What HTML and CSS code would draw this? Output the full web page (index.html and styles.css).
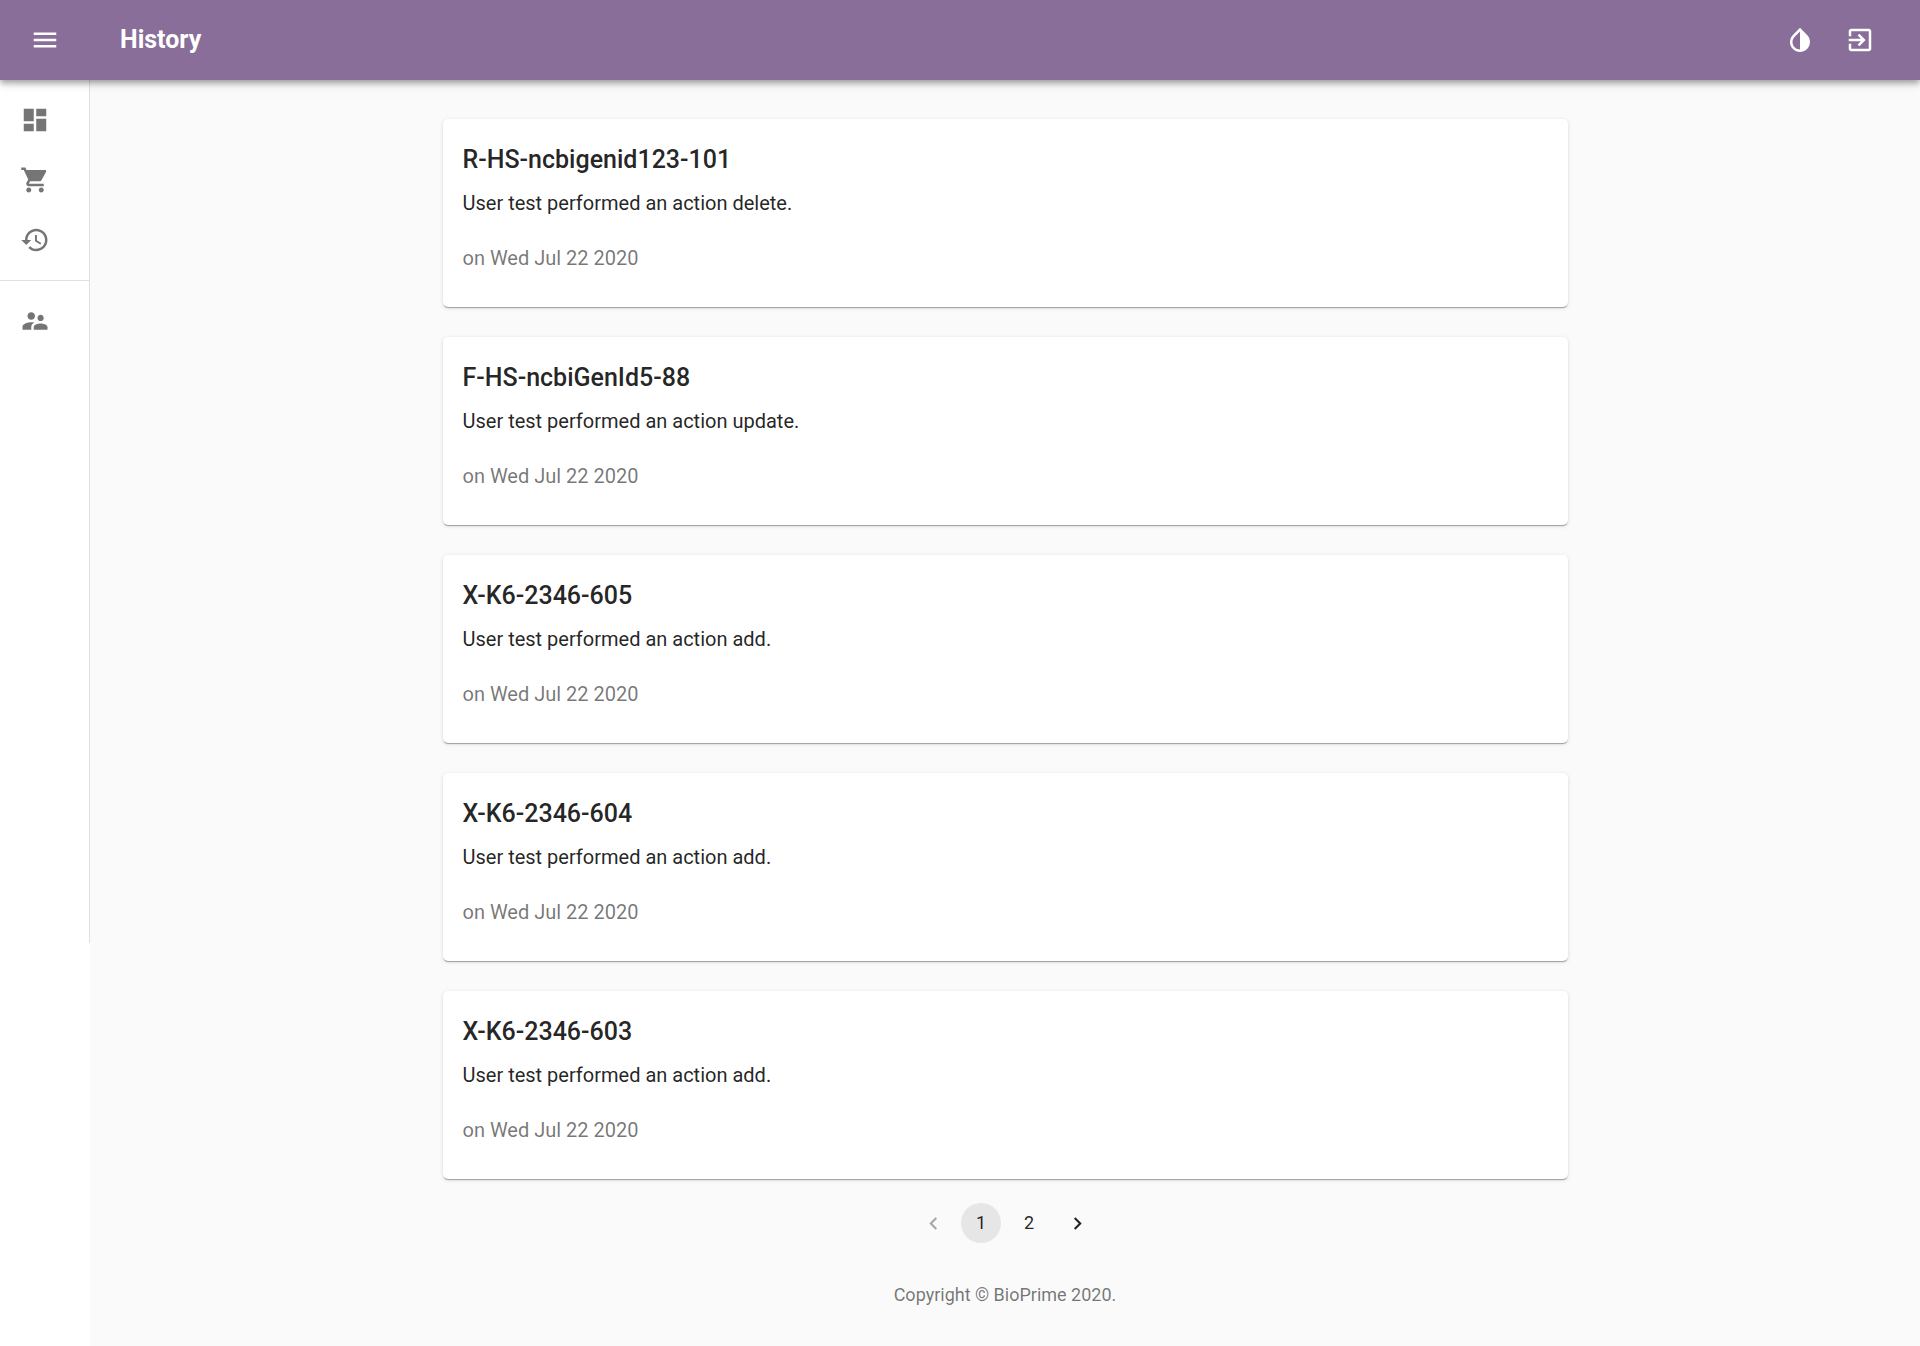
FILE: index.html
```
<!DOCTYPE html>
<html lang="en">
<head>
    <meta charset="UTF-8">
    <title>History</title>
    <link rel="stylesheet" href="styles.css">
</head>
<body>
    <header class="app-bar">
        <button class="icon-btn" type="button" aria-label="Open menu">
            <svg class="icon" viewBox="0 0 24 24"><path d="M3 18h18v-2H3v2zm0-5h18v-2H3v2zm0-7v2h18V6H3z"/></svg>
        </button>
        <h1 class="app-title">History</h1>
        <button class="icon-btn" type="button" aria-label="Toggle theme">
            <svg class="icon" viewBox="0 0 24 24"><path d="M17.66 7.93L12 2.27 6.34 7.93c-3.12 3.12-3.12 8.19 0 11.31C7.9 20.8 9.95 21.58 12 21.58c2.05 0 4.1-.78 5.66-2.34 3.12-3.12 3.12-8.19 0-11.31zM12 19.59c-1.6 0-3.11-.62-4.24-1.76C6.62 16.69 6 15.19 6 13.59s.62-3.11 1.76-4.24L12 5.1v14.49z"/></svg>
        </button>
        <button class="icon-btn" type="button" aria-label="Log out">
            <svg class="icon" viewBox="0 0 24 24"><path d="M10.09 15.59L11.5 17l5-5-5-5-1.41 1.41L12.67 11H3v2h9.67l-2.58 2.59zM19 3H5c-1.11 0-2 .9-2 2v4h2V5h14v14H5v-4H3v4c0 1.1.89 2 2 2h14c1.1 0 2-.9 2-2V5c0-1.1-.9-2-2-2z"/></svg>
        </button>
    </header>

    <div class="layout">
        <aside class="drawer">
            <nav class="drawer-paper">
                <!-- user links -->
                <div class="nav-group">
                    <a class="nav-link" href="#" aria-label="Dashboard">
                        <svg class="icon" viewBox="0 0 24 24"><path d="M3 13h8V3H3v10zm0 8h8v-6H3v6zm10 0h8V11h-8v10zm0-18v6h8V3h-8z"/></svg>
                    </a>
                    <a class="nav-link" href="#" aria-label="Orders">
                        <svg class="icon" viewBox="0 0 24 24"><path d="M7 18c-1.1 0-1.99.9-1.99 2S5.9 22 7 22s2-.9 2-2-.9-2-2-2zM1 2v2h2l3.6 7.59-1.35 2.45c-.16.28-.25.61-.25.96 0 1.1.9 2 2 2h12v-2H7.42c-.14 0-.25-.11-.25-.25l.03-.12.9-1.63h7.45c.75 0 1.41-.41 1.75-1.03l3.58-6.49c.08-.14.12-.31.12-.48 0-.55-.45-1-1-1H5.21l-.94-2H1zm16 16c-1.1 0-1.99.9-1.99 2s.89 2 1.99 2 2-.9 2-2-.9-2-2-2z"/></svg>
                    </a>
                    <a class="nav-link" href="#" aria-label="History">
                        <svg class="icon" viewBox="0 0 24 24"><path d="M13 3c-4.97 0-9 4.03-9 9H1l3.89 3.89.07.14L9 12H6c0-3.87 3.13-7 7-7s7 3.13 7 7-3.13 7-7 7c-1.93 0-3.68-.79-4.94-2.06l-1.42 1.42C8.27 19.99 10.51 21 13 21c4.97 0 9-4.03 9-9s-4.03-9-9-9zm-1 5v5l4.28 2.54.72-1.21-3.5-2.08V8H12z"/></svg>
                    </a>
                </div>
                <!-- admin links -->
                <div class="nav-group">
                    <a class="nav-link" href="#" aria-label="Users">
                        <svg class="icon" viewBox="0 0 24 24"><path d="M16.5 12c1.38 0 2.49-1.12 2.49-2.5S17.88 7 16.5 7C15.12 7 14 8.12 14 9.5s1.12 2.5 2.5 2.5zM9 11c1.66 0 2.99-1.34 2.99-3S10.66 5 9 5C7.34 5 6 6.34 6 8s1.34 3 3 3zm7.5 3c-1.83 0-5.5.92-5.5 2.75V19h11v-2.25c0-1.83-3.67-2.75-5.5-2.75zM9 13c-2.33 0-7 1.17-7 3.5V19h7v-2.25c0-.85.33-2.34 2.37-3.47C10.5 13.1 9.66 13 9 13z"/></svg>
                    </a>
                </div>
            </nav>
        </aside>

        <main class="content">
            <div class="history">
                <article class="card">
                    <h2 class="card-title">R-HS-ncbigenid123-101</h2>
                    <p class="card-text">User test performed an action delete.</p>
                    <p class="card-date">on Wed Jul 22 2020</p>
                </article>
                <article class="card">
                    <h2 class="card-title">F-HS-ncbiGenId5-88</h2>
                    <p class="card-text">User test performed an action update.</p>
                    <p class="card-date">on Wed Jul 22 2020</p>
                </article>
                <article class="card">
                    <h2 class="card-title">X-K6-2346-605</h2>
                    <p class="card-text">User test performed an action add.</p>
                    <p class="card-date">on Wed Jul 22 2020</p>
                </article>
                <article class="card">
                    <h2 class="card-title">X-K6-2346-604</h2>
                    <p class="card-text">User test performed an action add.</p>
                    <p class="card-date">on Wed Jul 22 2020</p>
                </article>
                <article class="card">
                    <h2 class="card-title">X-K6-2346-603</h2>
                    <p class="card-text">User test performed an action add.</p>
                    <p class="card-date">on Wed Jul 22 2020</p>
                </article>
            </div>

            <nav class="pagination" aria-label="Pages">
                <button class="page-btn" type="button" aria-label="Previous page" disabled>
                    <svg class="page-icon" viewBox="0 0 24 24"><path d="M15.41 7.41L14 6l-6 6 6 6 1.41-1.41L10.83 12z"/></svg>
                </button>
                <button class="page-btn page-current" type="button" aria-current="page">1</button>
                <button class="page-btn" type="button">2</button>
                <button class="page-btn" type="button" aria-label="Next page">
                    <svg class="page-icon" viewBox="0 0 24 24"><path d="M10 6L8.59 7.41 13.17 12l-4.58 4.59L10 18l6-6z"/></svg>
                </button>
            </nav>

            <footer class="footer">Copyright © BioPrime 2020.</footer>
        </main>
    </div>
</body>
</html>
```
FILE: styles.css
```
* {
    box-sizing: border-box;
}

body {
    margin: 0;
    min-height: 100vh;
    display: flex;
    flex-direction: column;
    background: #fafafa;
    color: rgba(0, 0, 0, 0.87);
    font-family: Roboto, "Liberation Sans", sans-serif;
    font-size: 20px;
    line-height: 30px;
}

h1, h2, p {
    margin: 0;
}

button {
    border: 0;
    padding: 0;
    background: none;
    color: inherit;
    font: inherit;
    cursor: pointer;
}

.icon {
    display: block;
    width: 30px;
    height: 30px;
    fill: currentColor;
}

/* top bar */
.app-bar {
    position: relative;
    z-index: 1;
    display: flex;
    align-items: center;
    height: 80px;
    padding: 0 30px 0 15px;
    background: #896e9a;
    color: #fff;
    box-shadow: 0 3px 5px -1px rgba(0, 0, 0, 0.2), 0 5px 6px 0 rgba(0, 0, 0, 0.14), 0 1px 12px 0 rgba(0, 0, 0, 0.12);
}

.icon-btn {
    padding: 15px;
}

.app-title {
    flex: 1;
    margin-left: 45px;
    font-size: 25px;
    line-height: 42px;
    font-weight: 700;
}

.layout {
    flex: 1;
    display: flex;
}

/* side menu, the border ends with the paper */
.drawer {
    width: 90px;
    flex-shrink: 0;
    background: #fff;
}

.drawer-paper {
    min-height: 863px;
    border-right: 1px solid #e0e0e0;
}

.nav-group {
    padding: 10px 0;
}

.nav-group + .nav-group {
    border-top: 1px solid #e0e0e0;
}

.nav-link {
    display: block;
    padding: 15px 20px;
    color: #757575;
}

/* page */
.content {
    flex: 1;
    padding: 39px 30px 0;
}

.history {
    display: flex;
    flex-direction: column;
    gap: 30px;
    max-width: 1125px;
    margin: 0 auto;
}

.card {
    padding: 20px 20px 34px;
    border-radius: 5px;
    background: #fff;
    box-shadow: 0 2px 1px -1px rgba(0, 0, 0, 0.2), 0 1px 1px 0 rgba(0, 0, 0, 0.14), 0 1px 4px 0 rgba(0, 0, 0, 0.12);
}

.card-title {
    margin-bottom: 7px;
    font-size: 25px;
    line-height: 42px;
    font-weight: 500;
}

.card-date {
    margin-top: 25px;
    color: rgba(0, 0, 0, 0.54);
}

.pagination {
    display: flex;
    justify-content: center;
    gap: 8px;
    margin-top: 24px;
}

.page-btn {
    display: flex;
    align-items: center;
    justify-content: center;
    width: 40px;
    height: 40px;
    border-radius: 50%;
    font-size: 18px;
}

.page-btn:disabled {
    opacity: 0.38;
    cursor: default;
}

.page-current {
    background: #e6e6e6;
}

.page-icon {
    width: 25px;
    height: 25px;
    fill: currentColor;
}

.footer {
    margin-top: 37px;
    color: rgba(0, 0, 0, 0.54);
    font-size: 18px;
    text-align: center;
}
```
